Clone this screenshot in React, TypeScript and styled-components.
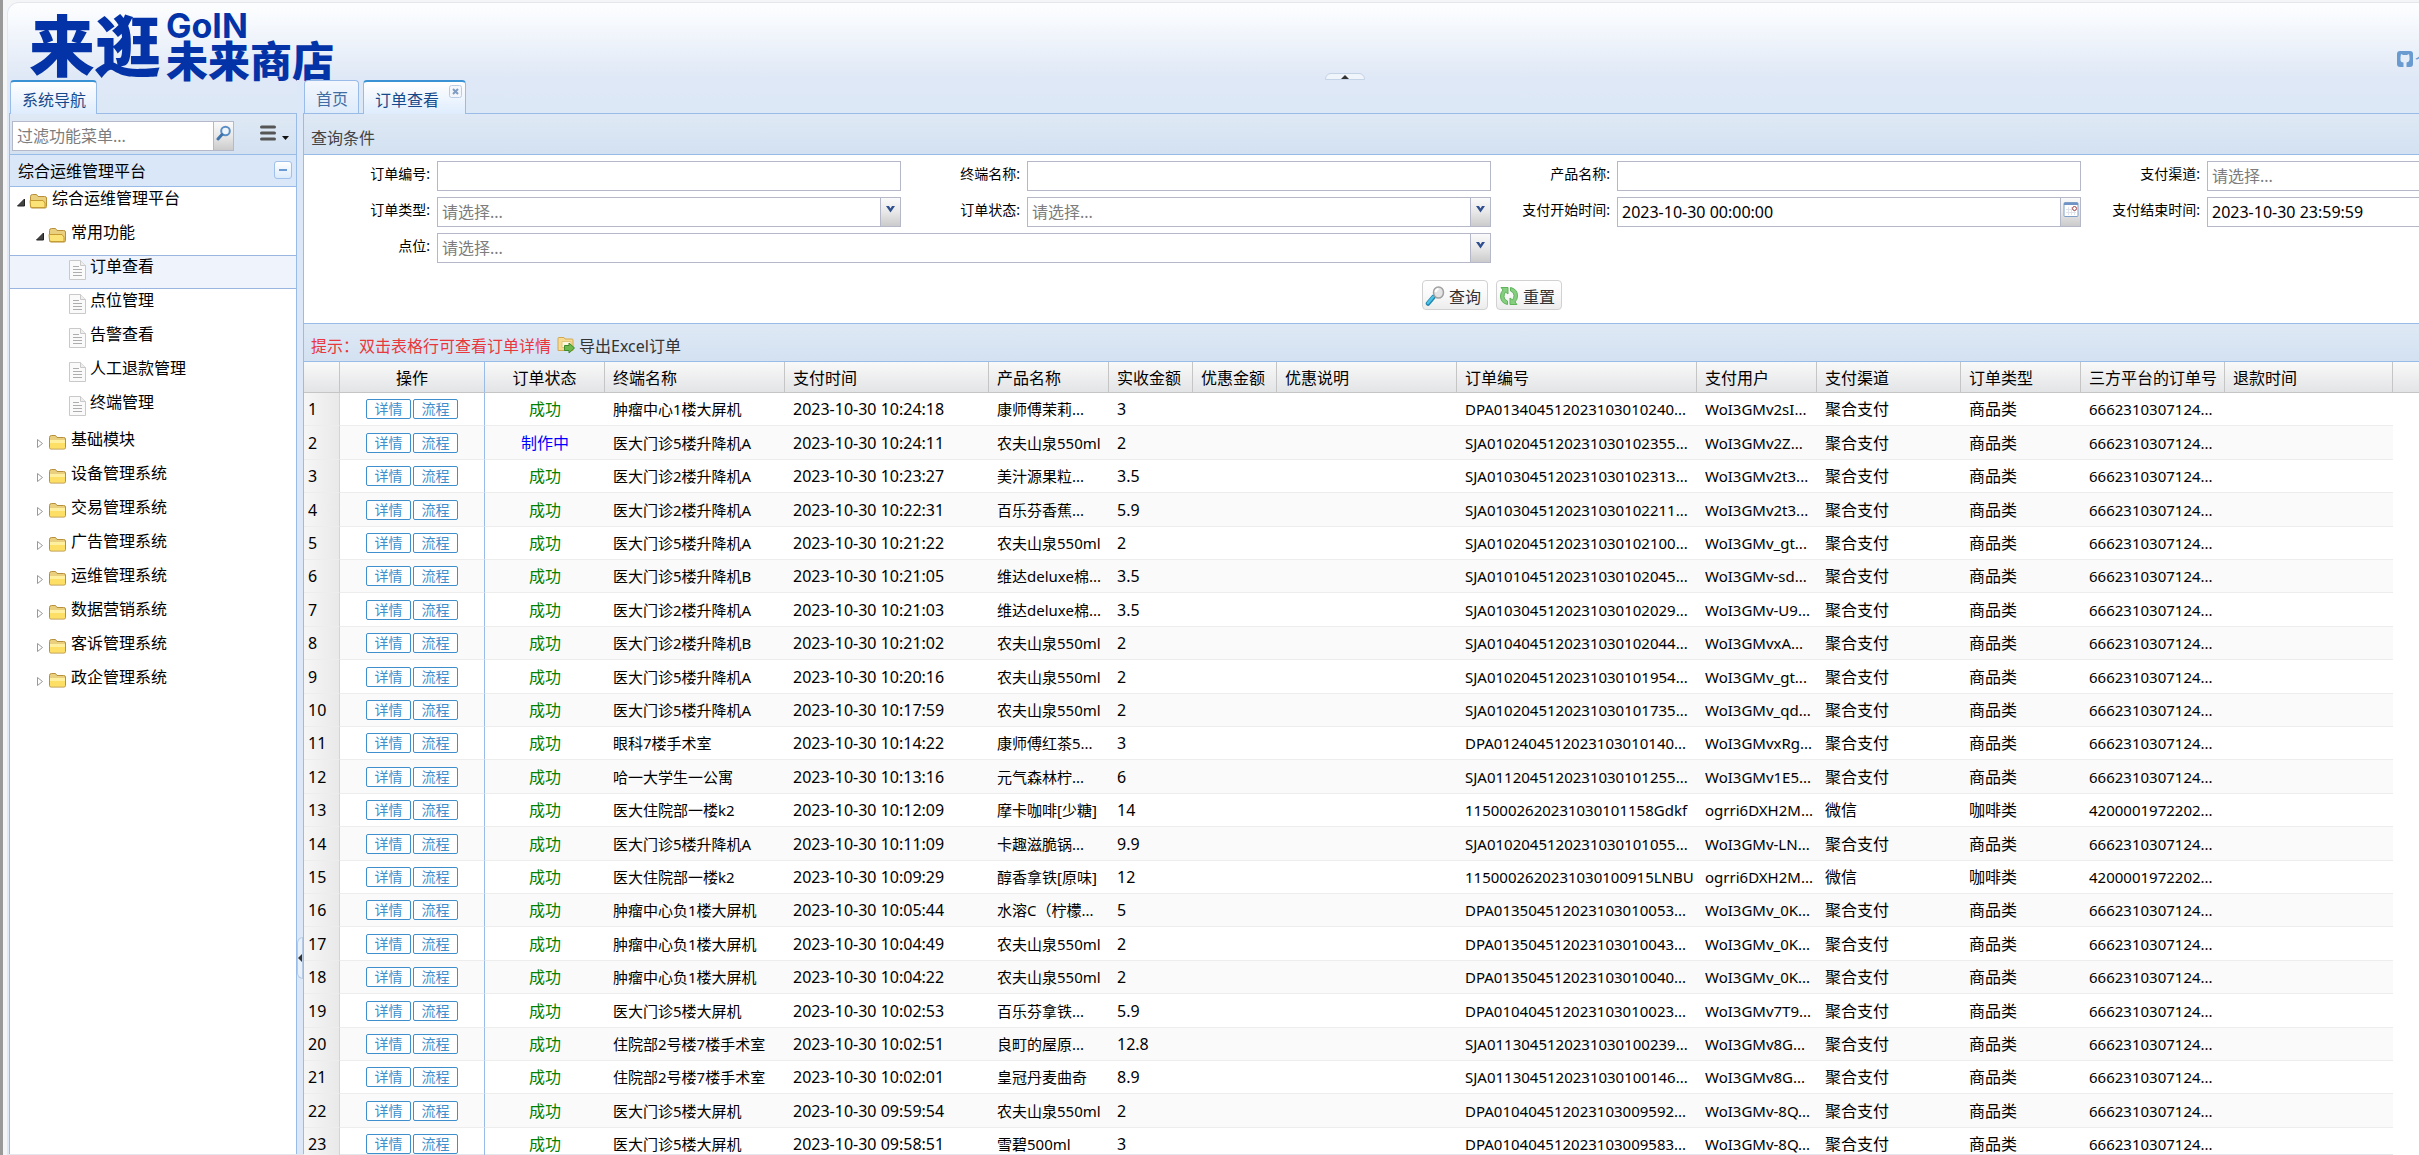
import React from 'react';
import styled, { createGlobalStyle, css } from 'styled-components';

const line = '#99bbe8';
const fieldLine = '#b5b8c8';
const toolbarFill = 'linear-gradient(#dfe9f5, #d3e1f1)';

const GlobalStyle = createGlobalStyle`
  * { box-sizing: border-box; }
  body {
    margin: 0;
    overflow: hidden;
    background: #f4f5f7;
    color: #000;
    font-family: "Noto Sans", "Noto Sans CJK SC", sans-serif;
    font-size: 16px;
  }
  button, input, select { font: inherit; color: inherit; margin: 0; }
  ul { list-style: none; margin: 0; padding: 0; }
`;

const Page = styled.div`
  display: flex;
  flex-direction: column;
  height: 100vh;
  min-width: 2680px;
  padding-top: 2px;
  border-left: 3px solid #999;
`;

const Shell = styled.div`
  flex: 1;
  display: flex;
  flex-direction: column;
  min-height: 0;
  margin-left: 4px;
  padding-left: 1px;
  border: 1px solid #e3e6ea;
  border-right: 0;
  border-radius: 12px 0 0 0;
  background: linear-gradient(#fdfeff 0, #f6f9fd 20px, #dfe8f6 75px, #dce8f6 110px, #dfe8f6 112px);
  border-left-color: #dfe8f6;
`;

const Header = styled.header`
  flex: none;
  display: flex;
  justify-content: space-between;
  height: 77px;
`;

const Logo = styled.h1`
  display: flex;
  align-items: center;
  gap: 5px;
  margin: 0;
  padding-left: 20px;
  color: #0433a8;
  font-family: "Noto Sans CJK SC", sans-serif;
  font-weight: 900;
`;

const LogoMark = styled.span`
  font-size: 66px;
  line-height: 66px;
`;

const LogoSide = styled.span`
  display: flex;
  flex-direction: column;
  padding-top: 6px;
`;

const LogoLatin = styled.span`
  font-family: Inter, sans-serif;
  font-size: 34px;
  font-weight: 700;
  line-height: 28px;
`;

const LogoName = styled.span`
  font-size: 42px;
  line-height: 38px;
`;

const HeaderTools = styled.nav`
  width: 283px;
  padding-top: 46px;
`;

const UserLink = styled.a`
  display: flex;
  align-items: center;
  gap: 2px;
  height: 20px;
  color: #6a9bd0;
  text-decoration: none;
`;

const Body = styled.div`
  flex: 1;
  display: flex;
  min-height: 0;
`;

const Side = styled.aside`
  display: flex;
  flex-direction: column;
  width: 288px;
`;

const Main = styled.main`
  flex: 1;
  display: flex;
  flex-direction: column;
  min-width: 0;
`;

const TabBar = styled.div`
  flex: none;
  display: flex;
  align-items: flex-end;
  gap: 4px;
  height: 33px;
  padding-left: 1px;
`;

const Tab = styled.button<{ $active?: boolean; $closable?: boolean }>`
  position: relative;
  height: 33px;
  padding: ${p => (p.$closable ? '3px 26px 0 11px' : '3px 10px 0 11px')};
  border: 1px solid ${line};
  border-bottom: 0;
  border-radius: 4px 4px 0 0;
  background: linear-gradient(#f3f7fd, #deebfb);
  color: #416da3;
  line-height: 24px;
  ${p =>
    p.$active
      ? css`
          z-index: 1;
          height: 34px;
          margin-bottom: -1px;
          border-top: 2px solid #3892d3;
          color: #15498b;
          background: linear-gradient(#fff, #deecfd);
        `
      : ''}
`;

const CloseMark = styled.svg`
  position: absolute;
  top: 3px;
  right: 3px;
`;

const Panel = styled.section`
  flex: 1;
  display: flex;
  flex-direction: column;
  min-height: 0;
  border: 1px solid ${line};
  border-bottom: 0;
  background: #fff;
  > * { flex: none; }
`;

const Bar = styled.div`
  display: flex;
  align-items: center;
  height: 41px;
  padding: 5px 7px 0;
  border-bottom: 1px solid ${line};
  background: ${toolbarFill};
  color: #444;
`;

const FilterBar = styled.div`
  display: flex;
  align-items: center;
  height: 41px;
  padding: 4px 6px 0 2px;
  border-bottom: 1px solid ${line};
  background: ${toolbarFill};
`;

const Frame = styled.div`
  display: flex;
  height: 30px;
  border: 1px solid ${fieldLine};
  background: #fff;
`;

const FilterFrame = styled(Frame)`
  width: 222px;
`;

const fieldText = css`
  flex: 1;
  min-width: 0;
  padding: 0 4px;
  border: 0;
  outline: 0;
  background: transparent;
  appearance: none;
`;

const TextInput = styled.input`
  ${fieldText}
  &::placeholder { color: #7d7d7d; opacity: 1; }
`;

const Select = styled.select`
  ${fieldText}
  color: #7d7d7d;
`;

const Trigger = styled.span`
  display: flex;
  justify-content: center;
  width: 20px;
  padding-top: 3px;
  border-left: 1px solid ${fieldLine};
  background: linear-gradient(#fafafa, #e8e8e8 50%, #cbcbcb);
`;

const TriggerButton = styled.button`
  display: flex;
  justify-content: center;
  width: 20px;
  padding: 3px 0 0;
  border: 0;
  border-left: 1px solid ${fieldLine};
  background: linear-gradient(#fafafa, #e8e8e8 50%, #cbcbcb);
`;

const MenuButton = styled.button`
  display: flex;
  align-items: center;
  margin-left: 26px;
  padding: 0 0 6px;
  border: 0;
  background: none;
`;

const AccordionHead = styled.h2`
  display: flex;
  align-items: center;
  justify-content: space-between;
  height: 32px;
  margin: 0;
  padding: 0 4px 2px 8px;
  border-bottom: 1px solid ${line};
  background: #d9e7f8;
  font-size: 16px;
  font-weight: 400;
`;

const ToggleButton = styled.button`
  display: flex;
  align-items: center;
  justify-content: center;
  width: 18px;
  height: 18px;
  padding: 0;
  border: 1px solid #9fc0e8;
  border-radius: 3px;
  background: linear-gradient(#fff, #dcebfb);
`;

const LeafGroup = styled.ul`
  margin-bottom: 3px;
`;

const TreeRow = styled.a<{ $depth: number; $selected?: boolean }>`
  display: flex;
  align-items: flex-start;
  gap: 4px;
  height: 34px;
  padding-left: ${p => 7 + p.$depth * 19}px;
  border: solid transparent;
  border-width: 1px 0;
  color: #000;
  line-height: 20px;
  text-decoration: none;
  svg { flex: none; margin-top: 4px; }
  ${p =>
    p.$selected
      ? css`
          border-color: #99b5e0;
          background: #eff3fb;
        `
      : ''}
`;

const LeafSpacer = styled.span`
  width: 10px;
`;

const VSplitter = styled.div`
  display: flex;
  align-items: flex-start;
  width: 6px;
  background: #dce8f8;
`;

const HSplitter = styled.div`
  display: flex;
  justify-content: center;
`;

const VHandle = styled.button`
  display: flex;
  align-items: center;
  width: 6px;
  height: 42px;
  margin-top: 857px;
  padding: 0;
  border: 1px solid #b8cbe4;
  border-radius: 6px 0 0 6px;
  background: #e8f0fa;
`;

const HHandle = styled.button`
  position: absolute;
  top: 73px;
  display: flex;
  justify-content: center;
  align-items: center;
  width: 40px;
  height: 7px;
  padding: 0;
  border: 1px solid #c5d3e6;
  border-radius: 6px 6px 0 0;
  background: #f0f5fb;
`;

const Form = styled.form`
  display: grid;
  grid-template-columns: repeat(4, minmax(590px, 1fr));
  row-gap: 6px;
  height: 168px;
  padding: 6px 8px 0;
  align-content: start;
`;

const Field = styled.div<{ $span?: number }>`
  display: flex;
  grid-column: span ${p => p.$span || 1};
  padding-right: 1px;
  ${Frame} { flex: 1; }
`;

const Label = styled.label`
  width: 125px;
  padding-right: 7px;
  font-size: 14px;
  line-height: 25px;
  text-align: right;
`;

const FormActions = styled.div`
  display: flex;
  grid-column: 1 / -1;
  justify-content: center;
  gap: 8px;
  padding-top: 11px;
`;

const ActionButton = styled.button`
  display: flex;
  align-items: center;
  gap: 4px;
  height: 30px;
  padding: 2px 6px 0 2px;
  border: 1px solid #d1d1d1;
  border-radius: 4px;
  background: linear-gradient(#fff, #f9f9f9 50%, #ececec);
  color: #333;
`;

const GridBar = styled.div`
  display: flex;
  align-items: center;
  gap: 6px;
  height: 39px;
  padding: 4px 7px 0;
  border: solid ${line};
  border-width: 1px 0;
  background: ${toolbarFill};
`;

const Tip = styled.span`
  color: #e8383d;
`;

const ExportButton = styled.button`
  display: flex;
  align-items: center;
  gap: 4px;
  padding: 0;
  border: 0;
  background: none;
  color: #333;
`;

const Table = styled.table`
  width: 100%;
  table-layout: fixed;
  border-collapse: separate;
  border-spacing: 0;
  font-size: 15px;
`;

type Align = 'left' | 'center';

const HeadCell = styled.th<{ $align?: Align }>`
  height: 31px;
  padding: 0 0 0 ${p => (p.$align === 'center' ? 0 : 8)}px;
  border-right: 1px solid #c5c5c5;
  border-bottom: 1px solid #c5c5c5;
  background: linear-gradient(#f9f9f9, #e3e4e6);
  font-size: 16px;
  font-weight: 400;
  text-align: ${p => p.$align || 'left'};
  white-space: nowrap;
  &:nth-child(2) { border-right-color: ${line}; }
  &:last-child { border-right: 0; }
`;

const Row = styled.tr`
  td { height: 33px; }
  &:nth-child(5n + 2) td, &:nth-child(5n + 4) td { height: 34px; }
  &:nth-child(even) td { background: #fafafa; }
`;

const Cell = styled.td<{ $align?: Align; $tone?: string; $divider?: boolean }>`
  padding: 0 0 0 ${p => (p.$align === 'center' ? 0 : 8)}px;
  overflow: hidden;
  border-bottom: 1px solid #ededed;
  border-right: ${p => (p.$divider ? `1px solid ${line}` : 0)};
  color: ${p => p.$tone || '#000'};
  line-height: 20px;
  text-align: ${p => p.$align || 'left'};
  white-space: nowrap;
`;

const LargeCell = styled(Cell)`
  font-size: 16px;
`;

const NumberCell = styled.th`
  padding: 0 0 0 4px;
  border-right: 1px solid #d4d4d4;
  border-bottom: 1px solid #ededed;
  background: linear-gradient(90deg, #f6f6f6, #e9e9e9);
  font-size: 16px;
  font-weight: 400;
  line-height: 20px;
  text-align: left;
`;

const BlankCell = styled.td`
  ${Row}:nth-child(n) > & { background: #fff; }
`;

const RowActions = styled.div`
  display: flex;
  justify-content: center;
  gap: 2px;
`;

const RowButton = styled.button`
  width: 45px;
  height: 20px;
  padding: 0;
  border: 1px solid #3e8fcb;
  border-radius: 2px;
  background: #fff;
  color: #3e8fcb;
  font-size: 14px;
  line-height: 18px;
`;

const columns: { title: string; width: number; align?: Align }[] = [
  { title: '', width: 36 },
  { title: '操作', width: 145, align: 'center' },
  { title: '订单状态', width: 120, align: 'center' },
  { title: '终端名称', width: 180 },
  { title: '支付时间', width: 204 },
  { title: '产品名称', width: 120 },
  { title: '实收金额', width: 84 },
  { title: '优惠金额', width: 84 },
  { title: '优惠说明', width: 180 },
  { title: '订单编号', width: 240 },
  { title: '支付用户', width: 120 },
  { title: '支付渠道', width: 144 },
  { title: '订单类型', width: 120 },
  { title: '三方平台的订单号', width: 144 },
  { title: '退款时间', width: 168 },
];

// terminal, time, product, paid amount, order number, payer
const orders: [string, string, string, string, string, string][] = [
  ['肿瘤中心1楼大屏机', '10:24:18', '康师傅茉莉...', '3', 'DPA013404512023103010240...', 'WoI3GMv2sI...'],
  ['医大门诊5楼升降机A', '10:24:11', '农夫山泉550ml', '2', 'SJA0102045120231030102355...', 'WoI3GMv2Z...'],
  ['医大门诊2楼升降机A', '10:23:27', '美汁源果粒...', '3.5', 'SJA0103045120231030102313...', 'WoI3GMv2t3...'],
  ['医大门诊2楼升降机A', '10:22:31', '百乐芬香蕉...', '5.9', 'SJA0103045120231030102211...', 'WoI3GMv2t3...'],
  ['医大门诊5楼升降机A', '10:21:22', '农夫山泉550ml', '2', 'SJA0102045120231030102100...', 'WoI3GMv_gt...'],
  ['医大门诊5楼升降机B', '10:21:05', '维达deluxe棉...', '3.5', 'SJA0101045120231030102045...', 'WoI3GMv-sd...'],
  ['医大门诊2楼升降机A', '10:21:03', '维达deluxe棉...', '3.5', 'SJA0103045120231030102029...', 'WoI3GMv-U9...'],
  ['医大门诊2楼升降机B', '10:21:02', '农夫山泉550ml', '2', 'SJA0104045120231030102044...', 'WoI3GMvxA...'],
  ['医大门诊5楼升降机A', '10:20:16', '农夫山泉550ml', '2', 'SJA0102045120231030101954...', 'WoI3GMv_gt...'],
  ['医大门诊5楼升降机A', '10:17:59', '农夫山泉550ml', '2', 'SJA0102045120231030101735...', 'WoI3GMv_qd...'],
  ['眼科7楼手术室', '10:14:22', '康师傅红茶5...', '3', 'DPA012404512023103010140...', 'WoI3GMvxRg...'],
  ['哈一大学生一公寓', '10:13:16', '元气森林柠...', '6', 'SJA0112045120231030101255...', 'WoI3GMv1E5...'],
  ['医大住院部一楼k2', '10:12:09', '摩卡咖啡[少糖]', '14', '1150002620231030101158Gdkf', 'ogrri6DXH2M...'],
  ['医大门诊5楼升降机A', '10:11:09', '卡趣滋脆锅...', '9.9', 'SJA0102045120231030101055...', 'WoI3GMv-LN...'],
  ['医大住院部一楼k2', '10:09:29', '醇香拿铁[原味]', '12', '1150002620231030100915LNBU', 'ogrri6DXH2M...'],
  ['肿瘤中心负1楼大屏机', '10:05:44', '水溶C（柠檬...', '5', 'DPA013504512023103010053...', 'WoI3GMv_0K...'],
  ['肿瘤中心负1楼大屏机', '10:04:49', '农夫山泉550ml', '2', 'DPA013504512023103010043...', 'WoI3GMv_0K...'],
  ['肿瘤中心负1楼大屏机', '10:04:22', '农夫山泉550ml', '2', 'DPA013504512023103010040...', 'WoI3GMv_0K...'],
  ['医大门诊5楼大屏机', '10:02:53', '百乐芬拿铁...', '5.9', 'DPA010404512023103010023...', 'WoI3GMv7T9...'],
  ['住院部2号楼7楼手术室', '10:02:51', '良町的屋原...', '12.8', 'SJA0113045120231030100239...', 'WoI3GMv8G...'],
  ['住院部2号楼7楼手术室', '10:02:01', '皇冠丹麦曲奇', '8.9', 'SJA0113045120231030100146...', 'WoI3GMv8G...'],
  ['医大门诊5楼大屏机', '09:59:54', '农夫山泉550ml', '2', 'DPA010404512023103009592...', 'WoI3GMv-8Q...'],
  ['医大门诊5楼大屏机', '09:58:51', '雪碧500ml', '3', 'DPA010404512023103009583...', 'WoI3GMv-8Q...'],
];

const leaves = ['订单查看', '点位管理', '告警查看', '人工退款管理', '终端管理'];
const folders = [
  '基础模块', '设备管理系统', '交易管理系统', '广告管理系统',
  '运维管理系统', '数据营销系统', '客诉管理系统', '政企管理系统',
];

const Expander = ({ open }: { open?: boolean }) => (
  <svg width="8" height="18" viewBox="0 0 8 18" aria-hidden>
    {open ? <path d="M7.500 7v7h-7z" fill="#444" stroke="#222" /> : <path d="M1.500 6.500v8l5-4z" fill="#fff" stroke="#999" />}
  </svg>
);

const Folder = ({ open }: { open?: boolean }) => (
  <svg width="19" height="18" viewBox="0 0 19 18" aria-hidden>
    <path d="M1.500 4.500q0-2 2-2h4l1.500 2h6.500q2 0 2 1.500v8.500q0 1.500-1.500 1.500h-13q-1.500 0-1.500-1.500z" fill="#e9cf7e" stroke="#b8903a" />
    {open ? (
      <path d="M1 8.500h13l2 2.500v4.500h-13q-1.500 0-1.500-1.500z" fill="#fbe377" stroke="#c59c33" />
    ) : (
      <path d="M2 7h15v7.500q0 1-1 1h-13q-1 0-1-1z" fill="#fddf66" />
    )}
    {!open && <path d="M2 7h15v3h-15z" fill="#fff0a0" />}
  </svg>
);

const Leaf = () => (
  <svg width="17" height="20" viewBox="0 0 17 20" aria-hidden>
    <path d="M.5.5h11l5 5v14h-16z" fill="#fafafa" stroke="#c9c9c9" />
    <path d="M11.500.5v5h5" fill="#eee" stroke="#c9c9c9" />
    <path d="M4 6.500h6M4 9.500h9M4 12.500h9M4 15.500h9" stroke="#adadad" />
  </svg>
);

const Chevron = () => (
  <svg width="11" height="16" viewBox="0 0 11 16" aria-hidden>
    <path d="M1 5h3l1.500 2.500L7 5h3L5.500 11.500z" fill="#2f4f8f" />
  </svg>
);

const Calendar = () => (
  <svg width="16" height="17" viewBox="0 0 16 17" aria-hidden>
    <rect x="1" y="1.500" width="14" height="14" rx="1" fill="#fff" stroke="#7f9fc8" />
    <path d="M1 2h14v2h-14z" fill="#6f93c4" />
    <path d="M3 8.500h10M3 11.500h10M5.500 6v8M8.500 6v8M11.500 6v8" stroke="#dfe3ec" />
    <circle cx="11.500" cy="7.500" r="2" fill="#fff" stroke="#a8434a" />
  </svg>
);

const SearchGlyph = () => (
  <svg width="16" height="18" viewBox="0 0 16 18" aria-hidden>
    <circle cx="9.500" cy="6" r="4.300" fill="#eef5fc" stroke="#5b8ec4" strokeWidth="2" />
    <path d="M6 9.500l-4 4.500" stroke="#3f74ad" strokeWidth="3" strokeLinecap="round" />
  </svg>
);

const Magnifier = () => (
  <svg width="20" height="20" viewBox="0 0 20 20" aria-hidden>
    <path d="M8.500 11l-5.500 6.500" stroke="#1f86ad" strokeWidth="4.500" strokeLinecap="round" />
    <path d="M8 11l-5 6" stroke="#4cc3e6" strokeWidth="2.500" strokeLinecap="round" />
    <ellipse cx="13.500" cy="6.500" rx="5" ry="5.500" fill="#e4e4e4" stroke="#a0a0a0" strokeWidth="1.500" />
    <path d="M10.500 6q.5-2.500 3-3" stroke="#fff" strokeWidth="2" fill="none" />
  </svg>
);

const Refresh = () => (
  <svg width="20" height="20" viewBox="0 0 20 20" aria-hidden>
    <path d="M8.500 18.500Q1.500 17 1.500 10q0-3.500 2.500-6L2 1.500h7v6.500L6.500 6q-1.500 2-1.500 4.500 0 3.500 3.500 4.500z" fill="#86cf80" stroke="#5fb35a" />
    <path d="M11.500 1.500Q18.500 3 18.500 10q0 3.500-2.500 6l2 2.500h-7v-6.500l2.500 2q1.500-2 1.500-4.500 0-3.500-3.500-4.500z" fill="#86cf80" stroke="#5fb35a" />
  </svg>
);

const ExportIcon = () => (
  <svg width="18" height="18" viewBox="0 0 18 18" aria-hidden>
    <path d="M1 2.500q0-1 1-1h5l1 1.500h7q1 0 1 1v10.500H1z" fill="#f6dc92" stroke="#d3a852" />
    <path d="M5 5.500h9v6H5z" fill="#fff8df" stroke="#e3c47c" />
    <path d="M7.500 9.500h4.500v-2.500l5.500 5-5.500 5v-2.500h-4.500z" fill="#6cb84c" stroke="#3f8a2a" />
  </svg>
);

const Octo = () => (
  <svg width="16" height="16" viewBox="0 0 16 16" aria-hidden>
    <rect width="16" height="16" rx="3" fill="#6a9bd0" />
    <path d="M4 3l2 1h4l2-1 .5 3v3q-.5 2-3 2.500V16h-3v-4.500q-3-.5-3-2.500V6z" fill="#e4edf8" />
  </svg>
);

const TextField = ({ id, label, value, trigger }: { id: string; label: string; value?: string; trigger?: boolean }) => (
  <Field>
    <Label htmlFor={id}>{label}:</Label>
    <Frame>
      <TextInput id={id} type="text" defaultValue={value} />
      {trigger && (
        <TriggerButton type="button" aria-label="选择日期">
          <Calendar />
        </TriggerButton>
      )}
    </Frame>
  </Field>
);

const SelectField = ({ id, label, span }: { id: string; label: string; span?: number }) => (
  <Field $span={span}>
    <Label htmlFor={id}>{label}:</Label>
    <Frame>
      <Select id={id}>
        <option>请选择...</option>
      </Select>
      <Trigger>
        <Chevron />
      </Trigger>
    </Frame>
  </Field>
);

const Sidebar = () => (
  <Side>
    <TabBar>
      <Tab $active type="button">系统导航</Tab>
    </TabBar>
    <Panel>
      <FilterBar>
        <FilterFrame>
          <TextInput type="text" placeholder="过滤功能菜单..." aria-label="过滤功能菜单" />
          <TriggerButton type="button" aria-label="搜索">
            <SearchGlyph />
          </TriggerButton>
        </FilterFrame>
        <MenuButton type="button" aria-label="菜单">
          <svg width="30" height="16" viewBox="0 0 30 16" aria-hidden>
            <path d="M1.500 2h13M1.500 8h13M1.500 14h13" stroke="#555" strokeWidth="3" strokeLinecap="round" />
            <path d="M22 11h7l-3.500 4z" fill="#111" />
          </svg>
        </MenuButton>
      </FilterBar>
      <AccordionHead>
        综合运维管理平台
        <ToggleButton type="button" aria-label="折叠">
          <svg width="10" height="4" aria-hidden><path d="M1 2h8" stroke="#6b9bd2" strokeWidth="2" /></svg>
        </ToggleButton>
      </AccordionHead>
      <ul>
        <li>
          <TreeRow $depth={0} href="#"><Expander open /><Folder open />综合运维管理平台</TreeRow>
          <ul>
            <li>
              <TreeRow $depth={1} href="#"><Expander open /><Folder open />常用功能</TreeRow>
              <LeafGroup>
                {leaves.map((name, i) => (
                  <li key={name}>
                    <TreeRow $depth={2} $selected={i === 0} href="#"><LeafSpacer /><Leaf />{name}</TreeRow>
                  </li>
                ))}
              </LeafGroup>
            </li>
            {folders.map(name => (
              <li key={name}>
                <TreeRow $depth={1} href="#"><Expander /><Folder />{name}</TreeRow>
              </li>
            ))}
          </ul>
        </li>
      </ul>
    </Panel>
  </Side>
);

const OrderTable = () => (
  <Table>
    <colgroup>
      {columns.map((c, i) => (
        <col key={i} width={c.width} />
      ))}
      <col />
    </colgroup>
    <thead>
      <tr>
        {columns.map((c, i) => (
          <HeadCell key={i} $align={c.align}>{c.title}</HeadCell>
        ))}
        <HeadCell />
      </tr>
    </thead>
    <tbody>
      {orders.map(([terminal, time, product, paid, no, payer], i) => {
        const wechat = payer.startsWith('ogrri');
        const pending = i === 1;
        return (
          <Row key={i}>
            <NumberCell scope="row">{i + 1}</NumberCell>
            <Cell $align="center" $divider>
              <RowActions>
                <RowButton type="button">详情</RowButton>
                <RowButton type="button">流程</RowButton>
              </RowActions>
            </Cell>
            <LargeCell $align="center" $tone={pending ? '#00f' : 'green'}>{pending ? '制作中' : '成功'}</LargeCell>
            <Cell>{terminal}</Cell>
            <LargeCell>2023-10-30 {time}</LargeCell>
            <Cell>{product}</Cell>
            <LargeCell>{paid}</LargeCell>
            <Cell />
            <Cell />
            <Cell>{no}</Cell>
            <Cell>{payer}</Cell>
            <LargeCell>{wechat ? '微信' : '聚合支付'}</LargeCell>
            <LargeCell>{wechat ? '咖啡类' : '商品类'}</LargeCell>
            <Cell>{wechat ? '4200001972202...' : '6662310307124...'}</Cell>
            <Cell />
            <BlankCell />
          </Row>
        );
      })}
    </tbody>
  </Table>
);

export default function App() {
  return (
    <Page>
      <GlobalStyle />
      <Shell>
        <Header>
          <Logo>
            <LogoMark>来逛</LogoMark>
            <LogoSide>
              <LogoLatin>GoIN</LogoLatin>
              <LogoName>未来商店</LogoName>
            </LogoSide>
          </Logo>
          <HeaderTools>
            <UserLink href="#"><Octo />个</UserLink>
          </HeaderTools>
        </Header>
        <HSplitter>
          <HHandle type="button" aria-label="收起顶部">
            <svg width="8" height="4" aria-hidden><path d="M0 4l4-4 4 4z" fill="#333" /></svg>
          </HHandle>
        </HSplitter>
        <Body>
          <Sidebar />
          <VSplitter>
            <VHandle type="button" aria-label="收起左侧">
              <svg width="4" height="8" aria-hidden><path d="M4 0L0 4l4 4z" fill="#333" /></svg>
            </VHandle>
          </VSplitter>
          <Main>
            <TabBar>
              <Tab type="button">首页</Tab>
              <Tab $active $closable type="button">
                订单查看
                <CloseMark width="13" height="13" viewBox="0 0 13 13" aria-hidden>
                  <rect x=".5" y=".5" width="12" height="12" rx="2" fill="#f3f7fc" stroke="#b9cce4" />
                  <path d="M4 4l5 5M9 4l-5 5" stroke="#7f9cc2" strokeWidth="2" />
                </CloseMark>
              </Tab>
            </TabBar>
            <Panel>
              <Bar>查询条件</Bar>
              <Form>
                <TextField id="orderNo" label="订单编号" />
                <TextField id="terminal" label="终端名称" />
                <TextField id="product" label="产品名称" />
                <SelectField id="channel" label="支付渠道" />
                <SelectField id="orderType" label="订单类型" />
                <SelectField id="orderStatus" label="订单状态" />
                <TextField id="payStart" label="支付开始时间" value="2023-10-30 00:00:00" trigger />
                <TextField id="payEnd" label="支付结束时间" value="2023-10-30 23:59:59" trigger />
                <SelectField id="point" label="点位" span={2} />
                <FormActions>
                  <ActionButton type="button"><Magnifier />查询</ActionButton>
                  <ActionButton type="button"><Refresh />重置</ActionButton>
                </FormActions>
              </Form>
              <GridBar>
                <Tip>提示：双击表格行可查看订单详情</Tip>
                <ExportButton type="button"><ExportIcon />导出Excel订单</ExportButton>
              </GridBar>
              <OrderTable />
            </Panel>
          </Main>
        </Body>
      </Shell>
    </Page>
  );
}
